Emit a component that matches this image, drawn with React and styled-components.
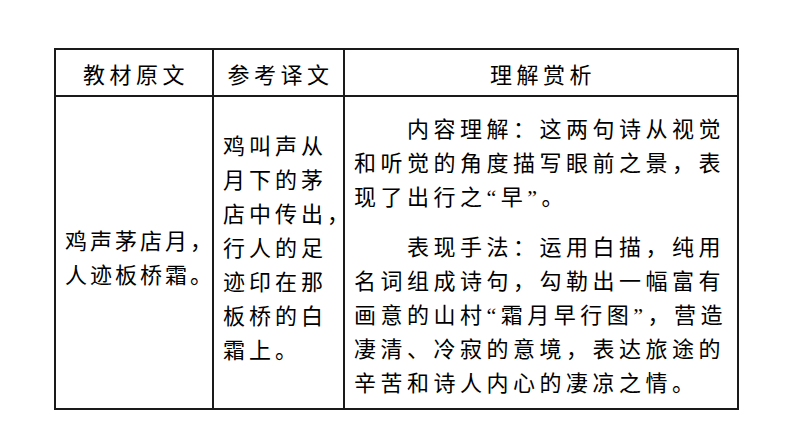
import React from "react";
import styled, { createGlobalStyle } from "styled-components";

const GlobalStyle = createGlobalStyle`
  html, body {
    margin: 0;
    padding: 0;
    background: #ffffff;
  }
  body {
    font-family: "Liberation Serif", "Noto Sans CJK SC", serif;
    color: #000;
  }
`;

const Page = styled.div`
  width: 794px;
  height: 447px;
  padding: 48px 0 0 54px;
  box-sizing: border-box;
`;

const Table = styled.div`
  display: grid;
  grid-template-columns: 158px 131px 394px;
  grid-template-rows: 47px 313px;
  border-top: 2px solid #1a1a1a;
  border-left: 2px solid #1a1a1a;
  width: 685px;
  box-sizing: border-box;
`;

const Cell = styled.div`
  border-right: 2px solid #1a1a1a;
  border-bottom: 2px solid #1a1a1a;
  box-sizing: border-box;
  font-size: 22px;
  letter-spacing: ${(p) => p.$ls || "4.5px"};
  line-height: 34px;
  min-width: 0;
`;

const HeadCell = styled(Cell)`
  display: flex;
  align-items: center;
  justify-content: center;
  padding: 6px 0 0 4px;
`;

const BodyCell = styled(Cell)`
  display: flex;
  flex-direction: column;
  justify-content: ${(p) => (p.$top ? "flex-start" : "center")};
  padding: ${(p) => p.$pad || "0 0 0 10px"};
`;

const Line = styled.div`
  white-space: nowrap;
  text-indent: ${(p) => (p.$indent ? "53px" : "0")};
  font-feature-settings: ${(p) => (p.$half ? '"halt"' : "normal")};
`;

const Para = styled.div`
  & + & {
    margin-top: 16px;
  }
`;

const App = () => {
  return (
    <Page>
      <GlobalStyle />
      <Table>
        <HeadCell>教材原文</HeadCell>
        <HeadCell>参考译文</HeadCell>
        <HeadCell>理解赏析</HeadCell>

        <BodyCell $ls="3px" $pad="12px 0 0 9px">
          <Line $half>鸡声茅店月，</Line>
          <Line $half>人迹板桥霜。</Line>
        </BodyCell>
        <BodyCell $ls="4px" $pad="0 0 8px 9px">
          <Line>鸡叫声从</Line>
          <Line>月下的茅</Line>
          <Line $half>店中传出，</Line>
          <Line>行人的足</Line>
          <Line>迹印在那</Line>
          <Line>板桥的白</Line>
          <Line $half>霜上。</Line>
        </BodyCell>
        <BodyCell $top $pad="16px 0 0 9px">
          <Para>
            <Line $indent>内容理解：这两句诗从视觉</Line>
            <Line>和听觉的角度描写眼前之景，表</Line>
            <Line>现了出行之“早”。</Line>
          </Para>
          <Para>
            <Line $indent>表现手法：运用白描，纯用</Line>
            <Line>名词组成诗句，勾勒出一幅富有</Line>
            <Line>画意的山村“霜月早行图”，营造</Line>
            <Line>凄清、冷寂的意境，表达旅途的</Line>
            <Line>辛苦和诗人内心的凄凉之情。</Line>
          </Para>
        </BodyCell>
      </Table>
    </Page>
  );
};

export default App;
